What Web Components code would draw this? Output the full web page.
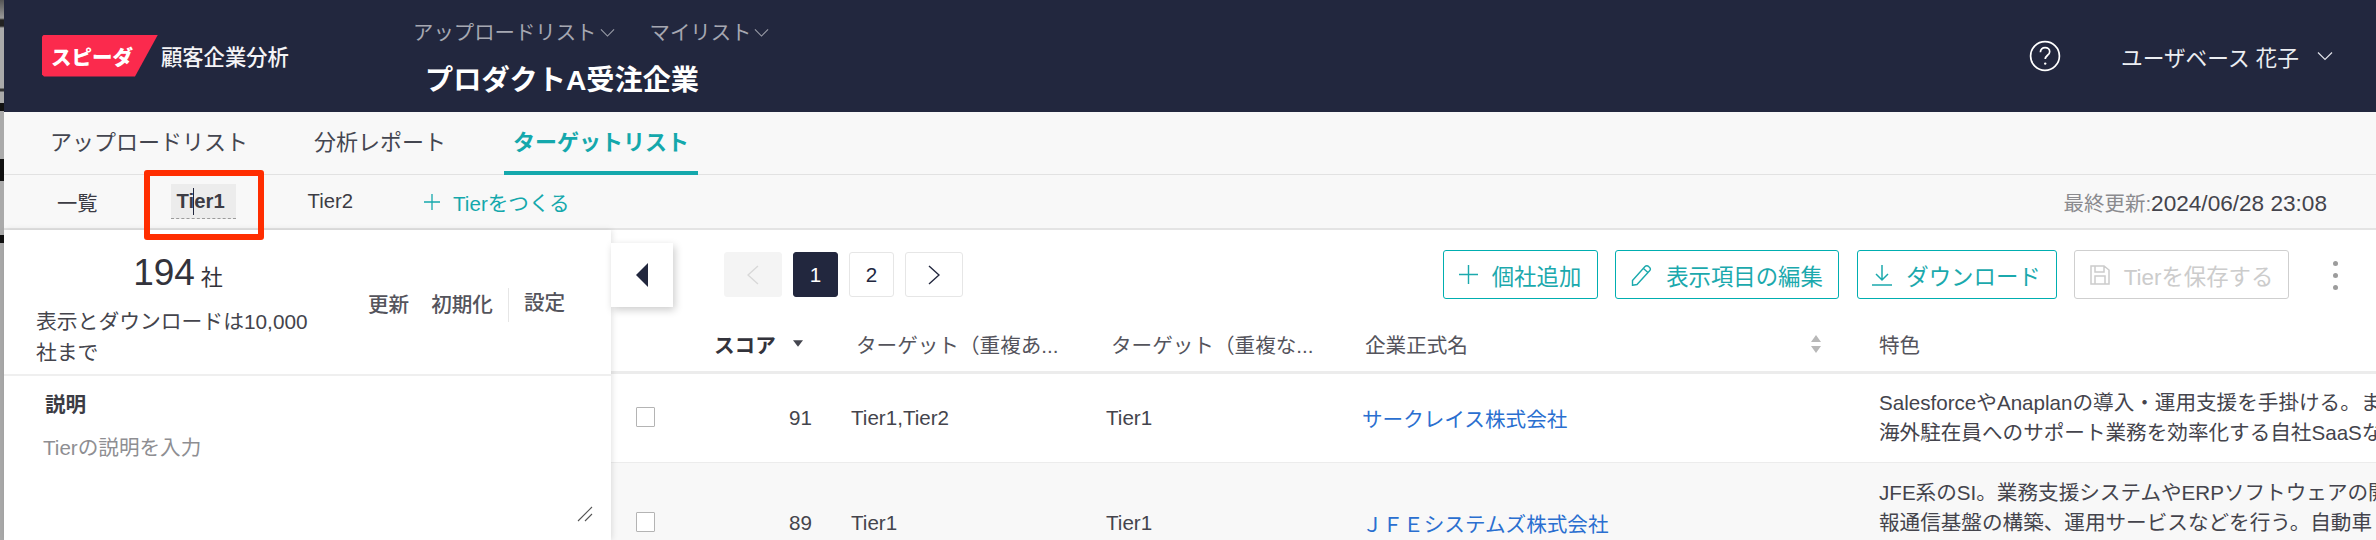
<!DOCTYPE html>
<html lang="ja">
<head>
<meta charset="utf-8">
<title>顧客企業分析</title>
<style>
html, body {margin: 0; height: 540px; overflow: hidden; background: #fff;}
body {font-family: "Liberation Sans", "Noto Sans CJK JP", sans-serif; color: #3c3c44;}
</style>
</head>
<body>
<app-shell>
    <app-header></app-header>
    <list-tabs></list-tabs>
    <tier-tabs></tier-tabs>
    <div style="display:flex; height:310px;">
        <tier-panel></tier-panel>
        <main-pane>
            <main-toolbar></main-toolbar>
            <company-table></company-table>
        </main-pane>
    </div>
</app-shell>

<script>
const chevron = (w, color) => `<svg width="${w}" height="${w / 2 + 2}" viewBox="0 0 16 9" fill="none" stroke="${color}" stroke-width="1.2"><path d="M1 1l7 7 7-7"/></svg>`;

class AppShell extends HTMLElement {
    constructor() {
        super();
        this.attachShadow({mode: 'open'});
        this.shadowRoot.innerHTML = `
            <style>
            :host {display: flex; width: 2376px; height: 540px; overflow: hidden;}
            .edge {width: 4px; flex: none; background: linear-gradient(#555 0, #999 18px, #222 20px, #222 26px, #aaa 28px, #aaa 88px, #333 89px, #333 91px, #aaa 92px, #aaa 103px, #111 103px, #111 111px, #aaa 111px, #aaa 159px, #111 159px, #111 181px, #aaa 181px, #aaa 235px, #111 235px, #111 243px, #aaa 243px);}
            .content {flex: 1; min-width: 0; display: flex; flex-direction: column;}
            </style>
            <div class="edge"></div>
            <div class="content"><slot></slot></div>
        `;
    }
}

class AppHeader extends HTMLElement {
    constructor() {
        super();
        this.attachShadow({mode: 'open'});
        this.shadowRoot.innerHTML = `
            <style>
            :host {display: flex; align-items: center; height: 112px; background: #22273e; color: #fff; flex: none;}
            .logo {display: flex; align-items: center; margin-left: 38px; width: 371px; margin-top: -1px;}
            .mark {width: 116px; height: 42px; flex: none; background: #fb2a4d; clip-path: polygon(2px 0, 116px 0, 93px 42px, 2px 42px, 0 40px, 0 2px); display: flex; align-items: center; padding-left: 9px; box-sizing: border-box; font-size: 20.5px; font-weight: 900; white-space: nowrap;}
            .name {font-size: 21.3px; font-weight: 500; margin-left: 3px; color: #f4f4f6; white-space: nowrap;}
            .center {display: flex; flex-direction: column; flex: 1; align-self: flex-start; padding-top: 19px;}
            .menus {display: flex; gap: 35px; font-size: 20.4px; line-height: 28px; color: #a6a8b2;}
            .menus span {display: flex; align-items: center; gap: 3px;}
            .title {font-size: 28.2px; font-weight: 700; line-height: 40px; margin: 13px 0 0 12px;}
            .help {margin-right: 60px; display: flex;}
            .user {font-size: 21.7px; display: flex; align-items: center; color: #eceef2; margin-right: 43px; gap: 18px;}
            </style>
            <div class="logo">
                <div class="mark">スピーダ</div>
                <div class="name">顧客企業分析</div>
            </div>
            <div class="center">
                <div class="menus">
                    <span>アップロードリスト${chevron(15, '#9a9ca8')}</span>
                    <span>マイリスト${chevron(15, '#9a9ca8')}</span>
                </div>
                <div class="title">プロダクトA受注企業</div>
            </div>
            <div class="help">
                <svg width="32" height="32" viewBox="0 0 32 32" fill="none" stroke="#fff" stroke-width="1.7"><circle cx="16" cy="16" r="14.4"/><path d="M11.4 12.2c0-2.8 2-4.6 4.7-4.6 2.6 0 4.6 1.7 4.6 4.1 0 3.5-4.5 3.6-4.5 7.4"/><circle cx="16.2" cy="23.6" r="1.2" fill="#fff" stroke="none"/></svg>
            </div>
            <div class="user"><span>ユーザベース 花子</span>${chevron(16, '#dfe1e8')}</div>
        `;
    }
}

class ListTabs extends HTMLElement {
    constructor() {
        super();
        this.attachShadow({mode: 'open'});
        this.shadowRoot.innerHTML = `
            <style>
            :host {display: flex; height: 63px; box-sizing: border-box; background: #f8f8f8; border-bottom: 1px solid #e2e2e2; padding-left: 36px; gap: 46px; flex: none;}
            div {font-size: 22px; height: 63px; box-sizing: border-box; line-height: 61px; padding: 0 10px; color: #444650; white-space: nowrap; margin-bottom: -1px;}
            .active {color: #14a8ac; font-weight: 700; border-bottom: 4px solid #14a8ac; padding: 0 9px; margin-left: 2px;}
            </style>
            <div>アップロードリスト</div>
            <div>分析レポート</div>
            <div class="active">ターゲットリスト</div>
        `;
    }
}

class TierTabs extends HTMLElement {
    constructor() {
        super();
        this.attachShadow({mode: 'open'});
        this.shadowRoot.innerHTML = `
            <style>
            :host {display: flex; align-items: center; position: relative; height: 55px; box-sizing: border-box; background: #f8f8f8; border-bottom: 2px solid #e4e4e4; padding-left: 53px; font-size: 20.3px; color: #3c3c44; flex: none;}
            .tier1 {margin-left: 73px; width: 65px; height: 35px; line-height: 34px; box-sizing: border-box; padding-left: 6px; background: #ececec; border-bottom: 1px dashed #9b9b9b; font-weight: 700; position: relative; margin-top: -1px;}
            .caret {position: absolute; left: 22px; top: 4px; width: 1.5px; height: 27px; background: #22273e;}
            .tier2 {margin-left: 72px;}
            .add {margin-left: 71px; color: #14a8ac; display: flex; align-items: center; gap: 13px; font-size: 20.6px;}
            .updated {margin-left: auto; margin-right: 49px; color: #8a8a8e; font-size: 20.5px;}
            .updated b {font-weight: 400; color: #44444c; font-size: 22.6px;}
            .mark-box {position: absolute; left: 140px; top: -5px; width: 120px; height: 70px; box-sizing: border-box; border: 6px solid #ff2d00; border-radius: 3px; z-index: 3;}
            </style>
            <span>一覧</span>
            <span class="tier1">Tier1<i class="caret"></i></span>
            <span class="tier2">Tier2</span>
            <span class="add"><svg width="16" height="16" viewBox="0 0 16 16" stroke="#14a8ac" stroke-width="1.3"><path d="M8 0v16M0 8h16"/></svg>Tierをつくる</span>
            <span class="updated">最終更新:<b>2024/06/28 23:08</b></span>
            <div class="mark-box"></div>
        `;
    }
}

class TierPanel extends HTMLElement {
    constructor() {
        super();
        this.attachShadow({mode: 'open'});
        this.shadowRoot.innerHTML = `
            <style>
            :host {display: flex; flex-direction: column; width: 607px; flex: none; background: #fff; position: relative; box-shadow: 1px 0 6px rgba(0,0,0,.12); z-index: 1; font-size: 20.6px;}
            .summary {display: flex; height: 146px; box-sizing: border-box; border-bottom: 2px solid #efefef;}
            .count {width: 332px; padding: 0 0 0 32px; flex: none; box-sizing: border-box;}
            .num {text-align: center; font-size: 37px; line-height: 46px; margin-top: 20px; padding-right: 16px; color: #33333b;}
            .num small {font-size: 22px; margin-left: 6px;}
            .note {font-size: 20.8px; line-height: 31px; margin-top: 5px; color: #44444c; width: 280px;}
            .actions {display: flex; align-items: center; height: 34px; margin: 58px 0 0 32px; font-weight: 500; color: #54545c; white-space: nowrap;}
            .actions span {padding-bottom: 4px;}
            .actions span + span {margin-left: 22px;}
            .actions .set {border-left: 1px solid #e6e6e6; margin-left: 15px; padding-left: 15px; line-height: 30px;}
            .desc {padding: 14px 0 0 41px; flex: 1; position: relative;}
            .desc h4 {margin: 0; font-size: 20.6px; line-height: 30px; font-weight: 700; color: #3c3c44;}
            .desc p {margin: 13px 0 0 -2px; line-height: 30px; color: #8e8e92;}
            svg {position: absolute; left: 573px; top: 130px;}
            </style>
            <div class="summary">
                <div class="count">
                    <div class="num">194<small>社</small></div>
                    <div class="note">表示とダウンロードは10,000社まで</div>
                </div>
                <div class="actions"><span>更新</span><span>初期化</span><span class="set">設定</span></div>
            </div>
            <div class="desc">
                <h4>説明</h4>
                <p>Tierの説明を入力</p>
                <svg width="16" height="16" viewBox="0 0 16 16" stroke="#555" stroke-width="1.1"><path d="M1 15L15 1M8 15l7-7"/></svg>
            </div>
        `;
    }
}

class MainPane extends HTMLElement {
    constructor() {
        super();
        this.attachShadow({mode: 'open'});
        this.shadowRoot.innerHTML = `
            <style>
            :host {display: flex; flex-direction: column; flex: 1; min-width: 0; background: #fff;}
            </style>
            <slot></slot>
        `;
    }
}

class MainToolbar extends HTMLElement {
    constructor() {
        super();
        this.attachShadow({mode: 'open'});
        this.shadowRoot.innerHTML = `
            <style>
            :host {display: flex; align-items: flex-start; height: 77px; flex: none; position: relative; font-size: 20.6px;}
            .toggle {position: absolute; left: 0; top: 13px; width: 62px; height: 64px; background: #fff; box-shadow: 2px 3px 8px rgba(0,0,0,.2); z-index: 2; display: flex; align-items: center; justify-content: center;}
            .pager {display: flex; gap: 11px; margin: 22px 0 0 113px;}
            .pg {height: 45px; box-sizing: border-box; border: 1px solid #e6e6e6; border-radius: 3px; display: flex; align-items: center; justify-content: center; color: #22273e; width: 45px;}
            .arrow {width: 58px;}
            .off {background: #f4f4f4; border-color: #f4f4f4;}
            .on {background: #22273e; border-color: #22273e; color: #fff;}
            .btns {display: flex; gap: 17.5px; margin: 20px 0 0 auto; font-size: 22.4px;}
            .btn {height: 49px; box-sizing: border-box; border: 1.5px solid #00aeb0; border-radius: 3px; display: flex; align-items: center; justify-content: center; gap: 14px; color: #1ba9ad; white-space: nowrap;}
            .dis {border-color: #cfcfcf; color: #cccccc;}
            .more {width: 8px; margin: 31px 37px 0 42px; display: flex; flex-direction: column; align-items: center; gap: 7px;}
            .more i {width: 5px; height: 5px; border-radius: 50%; background: #9c9c9c; display: block;}
            </style>
            <div class="toggle"><svg width="13" height="24" viewBox="0 0 13 24" fill="#22273e"><path d="M12 0v24L0 12z"/></svg></div>
            <div class="pager">
                <div class="pg arrow off"><svg width="12" height="20" viewBox="0 0 12 20" fill="none" stroke="#d8d8d8" stroke-width="1.4"><path d="M11 1L1 10l10 9"/></svg></div>
                <div class="pg on">1</div>
                <div class="pg">2</div>
                <div class="pg arrow"><svg width="12" height="20" viewBox="0 0 12 20" fill="none" stroke="#22273e" stroke-width="1.4"><path d="M1 1l10 9-10 9"/></svg></div>
            </div>
            <div class="btns">
                <div class="btn" style="width:155px"><svg width="19" height="19" viewBox="0 0 20 20" stroke="#1ba9ad" stroke-width="1.5"><path d="M10 0v20M0 10h20"/></svg>個社追加</div>
                <div class="btn" style="width:224px"><svg width="21" height="22" viewBox="0 0 21 22" fill="none" stroke="#1ba9ad" stroke-width="1.4"><path d="M1.5 16.5L14 2.5a2.4 2.4 0 0 1 3.6 0l1 1a2.4 2.4 0 0 1 0 3.3L6 20.5l-4.5.8zM12.5 4.5l4.7 4.2"/></svg>表示項目の編集</div>
                <div class="btn" style="width:200px"><svg width="20" height="22" viewBox="0 0 20 22" fill="none" stroke="#1ba9ad" stroke-width="1.5"><path d="M10 1v14M4 10l6 6 6-6M0 21h20"/></svg>ダウンロード</div>
                <div class="btn dis" style="width:215px; border-width:1px"><svg width="20" height="20" viewBox="0 0 20 20" fill="none" stroke="#cccccc" stroke-width="1.5"><path d="M1 1h13l5 4v14H1zM5 1v6h9V1M5 19v-8h10v8"/></svg>Tierを保存する</div>
            </div>
            <div class="more"><i></i><i></i><i></i></div>
        `;
    }
}

class CompanyTable extends HTMLElement {
    constructor() {
        super();
        this.attachShadow({mode: 'open'});
        this.shadowRoot.innerHTML = `
            <style>
            :host {display: block; flex: 1; overflow: hidden; font-size: 20.6px; color: #44444c;}
            .row {display: grid; grid-template-columns: 240px 255px 256px 517px 1fr; align-items: center; white-space: nowrap;}
            .head {height: 64px; border-bottom: 3px solid #ececec; color: #54545c;}
            .head > div {padding-top: 9px;}
            .body {height: 88px; border-bottom: 1px solid #ececec;}
            .alt {background: #f8f8f8; height: 120px;}
            .score {display: flex; align-items: center; font-weight: 700; color: #33333b; padding-left: 103px;}
            .score svg {margin-left: 17px;}
            .check {display: flex; align-items: center; justify-content: flex-end; height: 100%; position: relative; padding-right: 39px;}
            .check i {position: absolute; left: 25px; width: 19px; height: 20px; box-sizing: border-box; border: 1.5px solid #b4b4b4; background: #fff; border-radius: 1px; margin-top: -2px;}
            .hl {padding-left: 5px;}
            .hr {display: flex; align-items: center; padding-left: 3px; padding-right: 57px; justify-content: space-between;}
            a {color: #2a6fd0; text-decoration: none;}
            .desc {line-height: 30px; overflow: hidden;}
            .alt .desc {align-self: start; padding-top: 15px;}
            </style>
            <div class="row head">
                <div class="score">スコア<svg width="10" height="7" viewBox="0 0 12 8" fill="#44464f"><path d="M0 0h12L6 8z"/></svg></div>
                <div class="hl">ターゲット（重複あ...</div>
                <div class="hl">ターゲット（重複な...</div>
                <div class="hr"><span>企業正式名</span><svg width="12" height="18" viewBox="0 0 12 18" fill="#b8b8b8"><path d="M6 0l5 7H1zM1 11h10l-5 7z"/></svg></div>
                <div>特色</div>
            </div>
            <div class="row body">
                <div class="check"><i></i><span>91</span></div>
                <div>Tier1,Tier2</div>
                <div>Tier1</div>
                <div><a>サークレイス株式会社</a></div>
                <div class="desc">SalesforceやAnaplanの導入・運用支援を手掛ける。ま<br>海外駐在員へのサポート業務を効率化する自社SaaSな</div>
            </div>
            <div class="row alt">
                <div class="check"><i></i><span>89</span></div>
                <div>Tier1</div>
                <div>Tier1</div>
                <div><a>ＪＦＥシステムズ株式会社</a></div>
                <div class="desc">JFE系のSI。業務支援システムやERPソフトウェアの開<br>報通信基盤の構築、運用サービスなどを行う。自動車</div>
            </div>
        `;
    }
}

customElements.define('app-shell', AppShell);
customElements.define('app-header', AppHeader);
customElements.define('list-tabs', ListTabs);
customElements.define('tier-tabs', TierTabs);
customElements.define('tier-panel', TierPanel);
customElements.define('main-pane', MainPane);
customElements.define('main-toolbar', MainToolbar);
customElements.define('company-table', CompanyTable);
</script>
</body>
</html>
